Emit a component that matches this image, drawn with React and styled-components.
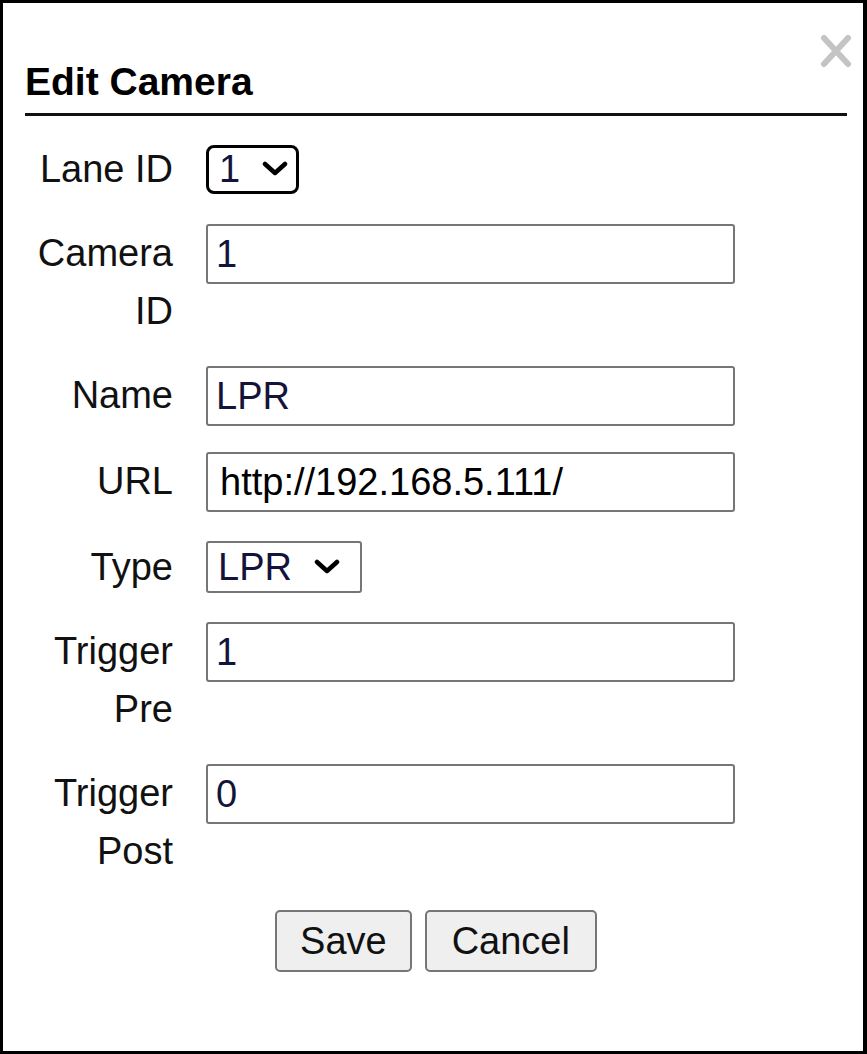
import React from 'react'
import styled, { createGlobalStyle } from 'styled-components'

const GlobalStyle = createGlobalStyle`
  html, body {
    margin: 0;
    padding: 0;
    background: #fff;
  }
  body {
    font-family: "Liberation Sans", Arial, sans-serif;
  }
`

const Frame = styled.div`
  position: relative;
  width: 867px;
  height: 1054px;
  box-sizing: border-box;
  border: 3px solid #000;
  border-right-width: 4px;
  padding: 56px 16px 0 22px;
  background: #fff;
`

const CloseButton = styled.button`
  position: absolute;
  top: 30px;
  right: 11px;
  width: 32px;
  height: 36px;
  padding: 0;
  border: none;
  background: transparent;
  display: flex;
  align-items: center;
  justify-content: center;
`

const Title = styled.h2`
  margin: 0;
  font-size: 39px;
  font-weight: bold;
  line-height: 45px;
  color: #000;
  padding-bottom: 9px;
  border-bottom: 3px solid #111;
`

const Form = styled.div`
  display: grid;
  grid-template-columns: 148px 1fr;
  column-gap: 33px;
  row-gap: 26px;
  align-items: start;
  margin-top: 24px;
`

const Label = styled.label`
  font-size: 38px;
  line-height: 58px;
  text-align: right;
  color: #111;
`

const Field = styled.div`
  min-height: 58px;
  display: flex;
  align-items: center;
`

const TextInput = styled.input`
  width: 529px;
  height: 60px;
  box-sizing: border-box;
  border: 2px solid #767676;
  border-radius: 3px;
  padding: 0 0 0 ${p => p.$indent || 8}px;
  font-family: "Liberation Sans", Arial, sans-serif;
  font-size: 38px;
  color: ${p => p.$plain ? '#000' : '#14143a'};
  background: #fff;
  outline: none;
`

const SelectBox = styled.div`
  display: flex;
  align-items: center;
  box-sizing: border-box;
  width: ${p => p.$width}px;
  height: ${p => p.$height}px;
  border: ${p => p.$focused ? '3px solid #000' : '2px solid #767676'};
  border-radius: ${p => p.$focused ? '8px' : '3px'};
  padding-left: ${p => p.$focused ? 10 : 10}px;
  font-size: 38px;
  color: #14143a;
  background: #fff;
`

const SelectValue = styled.span`
  line-height: 1;
`

const Chevron = styled.svg`
  margin-left: ${p => p.$gap}px;
  flex-shrink: 0;
`

const Actions = styled.div`
  display: flex;
  justify-content: center;
  gap: 13px;
  margin-top: 30px;
`

const Button = styled.button`
  height: 62px;
  box-sizing: border-box;
  padding: 0 ${p => p.$pad}px;
  border: 2px solid #767676;
  border-radius: 5px;
  background: #efefef;
  font-family: "Liberation Sans", Arial, sans-serif;
  font-size: 38px;
  color: #111;
`

const ChevronIcon = ({ gap }) => (
  <Chevron $gap={gap} width="26" height="16" viewBox="0 0 26 16">
    <polyline points="3,3 13,12 23,3" fill="none" stroke="#000" strokeWidth="4.5" strokeLinecap="round" strokeLinejoin="round" />
  </Chevron>
)

const Select = ({ value, width, height, focused, gap }) => (
  <SelectBox $width={width} $height={height} $focused={focused}>
    <SelectValue>{value}</SelectValue>
    <ChevronIcon gap={gap} />
  </SelectBox>
)

const App = () => (
  <>
    <GlobalStyle />
    <Frame>
      <CloseButton aria-label="close">
        <svg width="32" height="34" viewBox="0 0 32 34">
          <line x1="4" y1="4" x2="28" y2="30" stroke="#c4c4c4" strokeWidth="6" strokeLinecap="round" />
          <line x1="28" y1="4" x2="4" y2="30" stroke="#c4c4c4" strokeWidth="6" strokeLinecap="round" />
        </svg>
      </CloseButton>
      <Title>Edit Camera</Title>
      <Form>
        <Label>Lane ID</Label>
        <Field>
          <Select value="1" width={93} height={49} focused gap={22} />
        </Field>

        <Label>Camera ID</Label>
        <Field>
          <TextInput defaultValue="1" />
        </Field>

        <Label>Name</Label>
        <Field>
          <TextInput defaultValue="LPR" />
        </Field>

        <Label>URL</Label>
        <Field>
          <TextInput defaultValue="http://192.168.5.111/" $indent={12} $plain />
        </Field>

        <Label>Type</Label>
        <Field>
          <Select value="LPR" width={156} height={52} gap={22} />
        </Field>

        <Label>Trigger Pre</Label>
        <Field>
          <TextInput defaultValue="1" />
        </Field>

        <Label>Trigger Post</Label>
        <Field>
          <TextInput defaultValue="0" />
        </Field>
      </Form>
      <Actions>
        <Button $pad={23}>Save</Button>
        <Button $pad={25}>Cancel</Button>
      </Actions>
    </Frame>
  </>
)

export default App
